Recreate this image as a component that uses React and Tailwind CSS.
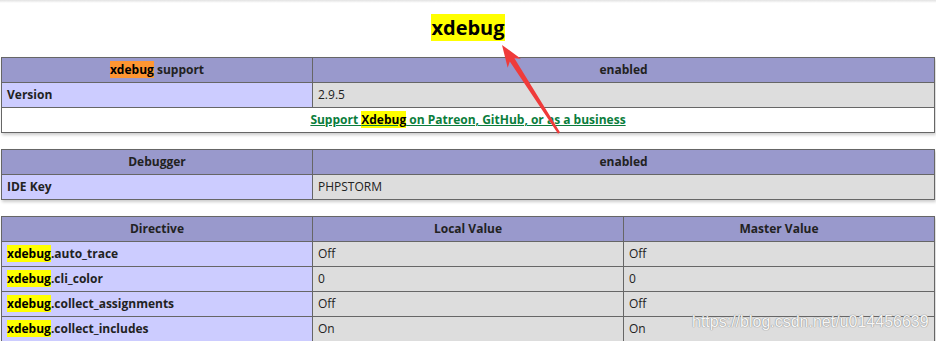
import React from "react";

const Hl = ({ children }) => <span className="bg-[#ffff00] text-black">{children}</span>;

const td = "border border-[#666666] px-[5px] py-[4px] text-[12px] leading-[16px] align-baseline text-[#222222]";
const H = ({ children, colSpan }) => (
  <th colSpan={colSpan} className={`${td} bg-[#9999cc] font-bold text-center`}>{children}</th>
);
const E = ({ children }) => <td className={`${td} bg-[#ccccff] font-bold text-left`}>{children}</td>;
const V = ({ children }) => <td className={`${td} bg-[#dddddd] text-left`}>{children}</td>;

const Table = ({ cols, children, last }) => (
  <table className={`table-fixed border-collapse mx-auto w-[934px] shadow-[1px_2px_3px_#cccccc] ${last ? "" : "mb-4"}`}>
    <colgroup>
      {cols.map((w, i) => (
        <col key={i} className={w} />
      ))}
    </colgroup>
    <tbody>{children}</tbody>
  </table>
);

export default function App() {
  const directives = [
    ["auto_trace", "Off", "Off"],
    ["cli_color", "0", "0"],
    ["collect_assignments", "Off", "Off"],
    ["collect_includes", "On", "On"],
  ];
  return (
    <div className="relative w-[936px] h-[341px] overflow-hidden bg-white font-['Open_Sans',sans-serif]">
      <div className="h-[3px] bg-gradient-to-b from-[#e2e2e2] to-white" />
      <h2 className="pt-[11px] mb-4 text-center text-[20px] leading-[27px] font-bold text-black">
        <Hl>xdebug</Hl>
      </h2>
      <Table cols={["w-[311px]", "w-auto"]}>
        <tr>
          <H>
            <span className="bg-[#ff9632] text-black">xdebug</span> support
          </H>
          <H>enabled</H>
        </tr>
        <tr>
          <E>Version</E>
          <V>2.9.5</V>
        </tr>
        <tr>
          <td colSpan={2} className={`${td} bg-white text-center`}>
            <a href="#" className="text-[#0a7d3c] font-bold underline">
              Support <Hl>Xdebug</Hl> on Patreon, GitHub, or as a business
            </a>
          </td>
        </tr>
      </Table>
      <Table cols={["w-[311px]", "w-auto"]}>
        <tr>
          <H>Debugger</H>
          <H>enabled</H>
        </tr>
        <tr>
          <E>IDE Key</E>
          <V>PHPSTORM</V>
        </tr>
      </Table>
      <Table cols={["w-[311px]", "w-[311px]", "w-auto"]} last>
        <tr>
          <H>Directive</H>
          <H>Local Value</H>
          <H>Master Value</H>
        </tr>
        {directives.map(([n, l, m]) => (
          <tr key={n}>
            <E>
              <Hl>xdebug</Hl>.{n}
            </E>
            <V>{l}</V>
            <V>{m}</V>
          </tr>
        ))}
      </Table>

      <svg className="absolute left-0 top-0 pointer-events-none" width="936" height="341" viewBox="0 0 936 341">
        <polygon
          points="502,45 520.9,58.7 514.4,58.3 560,132.3 558,133.7 509.8,61.5 507.7,67.7"
          fill="#ef3b3b"
        />
      </svg>

      <div className="absolute left-[692px] top-[313px] text-[16px] leading-[18px] font-['Liberation_Sans',Arial,sans-serif] text-[#f6f6f6] [text-shadow:0_0_1px_#8a8a8a,0_0_1px_#8a8a8a] pointer-events-none whitespace-nowrap">
        https://blog.csdn.net/u014456639
      </div>
    </div>
  );
}
